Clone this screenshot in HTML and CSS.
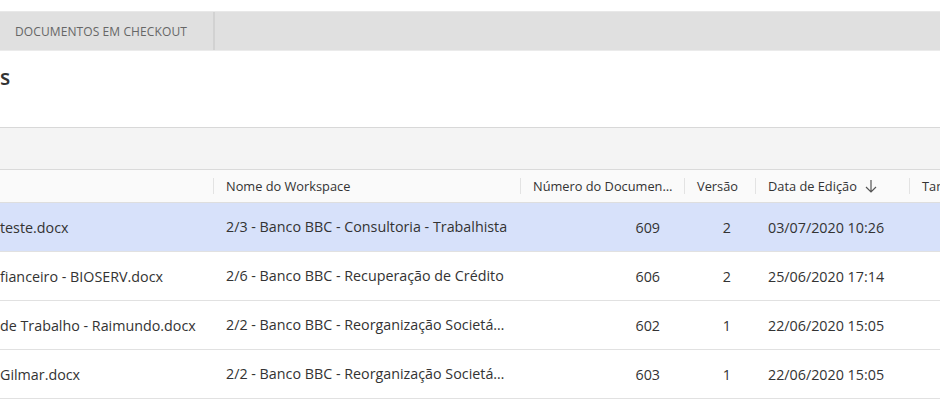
FILE: index.html
```html
<!DOCTYPE html>
<html lang="pt">
<head>
<meta charset="utf-8">
<link rel="stylesheet" href="styles.css">
</head>
<body>
<div class="page">
  <div class="tabs">
    <div class="tab">DOCUMENTOS EM CHECKOUT</div>
  </div>
  <div class="title-area"><h1 class="title">s</h1></div>
  <div class="toolbar"></div>
  <div class="grid">
    <div class="row head">
      <div class="cell c1"></div>
      <div class="cell c2 sep">Nome do Workspace</div>
      <div class="cell c3 sep">Número do Documento</div>
      <div class="cell c4 sep">Versão</div>
      <div class="cell c5 sep">Data de Edição <svg class="sort" width="12" height="14" viewBox="0 0 12 14"><path d="M6 1v12M1 8l5 5 5-5" fill="none" stroke="#555" stroke-width="1.2"/></svg></div>
      <div class="cell c6 sep">Tamanho</div>
    </div>
    <div class="row selected">
      <div class="cell c1">teste.docx</div>
      <div class="cell c2">2/3 - Banco BBC - Consultoria - Trabalhista</div>
      <div class="cell c3 num">609</div>
      <div class="cell c4 num">2</div>
      <div class="cell c5">03/07/2020 10:26</div>
      <div class="cell c6"></div>
    </div>
    <div class="row">
      <div class="cell c1">fianceiro - BIOSERV.docx</div>
      <div class="cell c2">2/6 - Banco BBC - Recuperação de Crédito</div>
      <div class="cell c3 num">606</div>
      <div class="cell c4 num">2</div>
      <div class="cell c5">25/06/2020 17:14</div>
      <div class="cell c6"></div>
    </div>
    <div class="row">
      <div class="cell c1">de Trabalho - Raimundo.docx</div>
      <div class="cell c2">2/2 - Banco BBC - Reorganização Societária</div>
      <div class="cell c3 num">602</div>
      <div class="cell c4 num">1</div>
      <div class="cell c5">22/06/2020 15:05</div>
      <div class="cell c6"></div>
    </div>
    <div class="row">
      <div class="cell c1">Gilmar.docx</div>
      <div class="cell c2">2/2 - Banco BBC - Reorganização Societária</div>
      <div class="cell c3 num">603</div>
      <div class="cell c4 num">1</div>
      <div class="cell c5">22/06/2020 15:05</div>
      <div class="cell c6"></div>
    </div>
  </div>
</div>
</body>
</html>
```
FILE: styles.css
```css
html, body {
  margin: 0;
  padding: 0;
  background: #fff;
}
body {
  font-family: "Open Sans", "Liberation Sans", sans-serif;
  color: #333;
  overflow: hidden;
}
.page {
  padding-top: 11px;
}
.tabs {
  display: flex;
  height: 38px;
  background: #e0e0e0;
  border-top: 1px solid #e8e8e8;
  border-bottom: 1px solid #ebebeb;
}
.tab {
  width: 215px;
  border-right: 2px solid #d2d2d2;
  font-size: 12px;
  color: #666;
  padding-left: 15px;
  box-sizing: border-box;
  display: flex;
  align-items: center;
  letter-spacing: 0.1px;
}
.title-area {
  height: 76px;
  box-sizing: border-box;
  padding-top: 14px;
}
.title {
  margin: 0;
  font-size: 21px;
  font-weight: 600;
  color: #333;
  line-height: 24px;
}
.toolbar {
  height: 41px;
  background: #f4f4f4;
  border-top: 1px solid #d8d8d8;
  border-bottom: 1px solid #dadada;
}
.row {
  display: grid;
  grid-template-columns: 213px 307px 164px 71px 154px 1fr;
  height: 48px;
  border-bottom: 1px solid #e1e1e1;
  font-size: 14.3px;
  color: #333;
}
.row.head {
  height: 32px;
  background: #fafafa;
  border-bottom: 1px solid #dedede;
  font-size: 12.8px;
  color: #333;
}
.row.selected {
  background: #d7e1fa;
}
.cell {
  display: flex;
  align-items: center;
  white-space: nowrap;
  overflow: hidden;
  min-width: 0;
  position: relative;
}
.cell > * {
  flex-shrink: 0;
}
.c1 {
  padding-left: 0;
}
.c2, .c3, .c4, .c5, .c6 {
  padding-left: 13px;
  padding-right: 12px;
}
.row:not(.head) .c2 {
  display: block;
  line-height: 48px;
  text-overflow: ellipsis;
}
.head .c3 {
  display: block;
  line-height: 32px;
  text-overflow: ellipsis;
  padding-right: 11px;
}
.num {
  justify-content: flex-end;
  padding-right: 24px;
}
.sep::before {
  content: "";
  position: absolute;
  left: 0;
  top: 8px;
  bottom: 8px;
  width: 1px;
  background: #e3e3e3;
}
.sort {
  margin-left: 8px;
}
```
